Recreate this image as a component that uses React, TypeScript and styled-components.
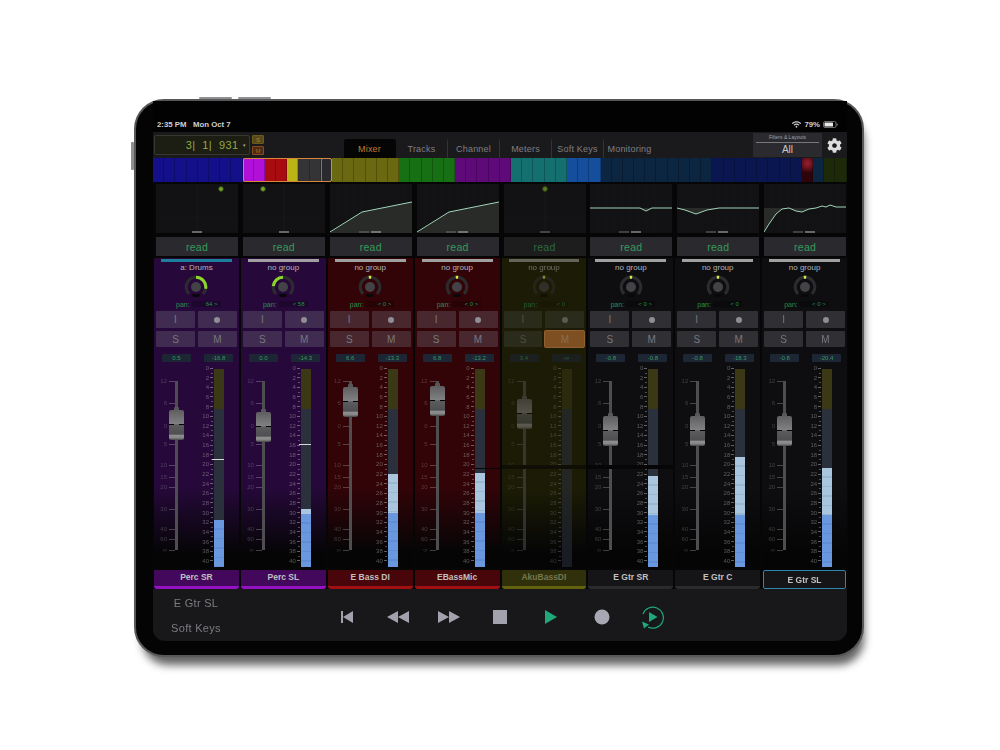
import React from 'react';
import styled, { createGlobalStyle } from 'styled-components';
import { FaCog, FaWifi } from 'react-icons/fa';

const GlobalStyle = createGlobalStyle`
  html, body {
    margin: 0;
    background: #fff;
    font-family: "Liberation Sans", Arial, sans-serif;
  }
`;

const Page = styled.div`
  width: 1000px;
  height: 750px;
  padding: 99px 0 0 134px;
  box-sizing: border-box;
  overflow: hidden;
`;

const Device = styled.div`
  position: relative;
  width: 730px;
  height: 558px;
  box-sizing: border-box;
  padding: 0 15px 14px 17px;
  display: flex;
  background: #040405;
  border: 2px solid #58585a;
  border-radius: 30px;
  box-shadow: 4px 12px 8px -4px rgba(0, 0, 0, 0.62);
`;

const SideButton = styled.div<{ $left: number; $top: number; $w: number; $h: number }>`
  position: absolute;
  left: ${(p) => p.$left}px;
  top: ${(p) => p.$top}px;
  width: ${(p) => p.$w}px;
  height: ${(p) => p.$h}px;
  background: #8f8f92;
  border-radius: 1px;
`;

const Screen = styled.div`
  flex: 1;
  display: flex;
  flex-direction: column;
  min-width: 0;
  filter: blur(0.4px);
`;

const StatusBar = styled.div`
  height: 31px;
  flex: none;
  box-sizing: border-box;
  padding: 0 9px 3px 4px;
  display: flex;
  align-items: flex-end;
  justify-content: space-between;
  color: #d0d0d0;
  font-size: 7.8px;
  font-weight: bold;
  background: #020203;
`;

const StatusRight = styled.div`
  display: flex;
  align-items: center;
  gap: 3px;
`;

const TopBar = styled.div`
  height: 26px;
  flex: none;
  display: flex;
  align-items: center;
  background: #1a1a1d;
`;

const Timecode = styled.div`
  width: 96px;
  height: 20px;
  margin-left: 1px;
  box-sizing: border-box;
  padding-right: 3px;
  display: flex;
  align-items: center;
  justify-content: flex-end;
  gap: 4px;
  background: #1c1d13;
  border: 1px solid #38382f;
  border-radius: 2px;
  color: #93aa46;
  font-size: 11px;
  letter-spacing: 0.4px;
  white-space: pre;
`;

const Caret = styled.span`
  color: #aaa;
  font-size: 5px;
`;

const SoloMute = styled.div`
  width: 12px;
  height: 20px;
  margin-left: 2px;
  display: flex;
  flex-direction: column;
  justify-content: space-between;
`;

const SmallKey = styled.div<{ $tone: string; $edge: string; $text: string }>`
  height: 9px;
  display: flex;
  align-items: center;
  justify-content: center;
  font-size: 6px;
  background: ${(p) => p.$tone};
  border: 1px solid ${(p) => p.$edge};
  box-sizing: border-box;
  border-radius: 1px;
  color: ${(p) => p.$text};
`;

const Tabs = styled.div`
  display: flex;
  align-self: flex-end;
  height: 19px;
  margin-left: 80px;
`;

const Tab = styled.div<{ $active?: boolean; $sep?: boolean }>`
  width: 52px;
  display: flex;
  align-items: center;
  justify-content: center;
  font-size: 9px;
  letter-spacing: 0.2px;
  white-space: nowrap;
  color: ${(p) => (p.$active ? '#c9772f' : '#7e7e83')};
  background: ${(p) => (p.$active ? '#050506' : 'transparent')};
  border-radius: 2px 2px 0 0;
  border-right: 1px solid ${(p) => (p.$sep ? '#333337' : 'transparent')};
  box-sizing: border-box;
`;

const Filters = styled.div`
  width: 69px;
  height: 24px;
  margin-left: auto;
  display: flex;
  flex-direction: column;
  align-items: center;
  background: #2b2b2f;
  color: #c8c8c8;
`;

const FiltersLabel = styled.div`
  width: 63px;
  height: 9px;
  border-bottom: 1px solid #77777c;
  font-size: 5px;
  line-height: 9px;
  text-align: center;
  color: #a0a0a4;
`;

const FiltersValue = styled.div`
  font-size: 10px;
  line-height: 14px;
`;

const GearSlot = styled.div`
  width: 25px;
  display: flex;
  justify-content: center;
  color: #dcdcdc;
  font-size: 15px;
`;

const Overview = styled.div`
  height: 24px;
  flex: none;
  display: flex;
`;

const Cell = styled.div<{ $color: string; $glow?: boolean; $frame?: boolean }>`
  flex: 1 1 0;
  background: ${(p) =>
    p.$glow ? `radial-gradient(circle at 50% 22%, #93202e 0, #7a1622 18%, ${p.$color} 50%)` : p.$color};
  box-shadow: inset -1px 0 rgba(0, 0, 0, 0.22);
  outline: ${(p) => (p.$frame ? '1.5px solid #3f86c4' : 'none')};
  outline-offset: -1px;
  border-radius: ${(p) => (p.$frame ? '2px' : '0')};
`;

const Selection = styled.div<{ $span: number }>`
  flex: ${(p) => p.$span} ${(p) => p.$span} 0;
  display: flex;
  outline: 1.5px solid #d9873a;
  outline-offset: -1px;
  border-radius: 2px;
`;

const Mixer = styled.div`
  flex: none;
  width: 693px;
  padding: 2px 1px 0;
  display: grid;
  grid-template-columns: repeat(8, 1fr);
  column-gap: 2px;
  background: #060607;
`;

const Strip = styled.div`
  display: flex;
  flex-direction: column;
  min-width: 0;
`;

const Graph = styled.svg`
  display: block;
  width: 82px;
  height: 49px;
  margin-left: 2px;
  background: #121214;
`;

const ReadButton = styled.div<{ $dim?: boolean }>`
  width: 82px;
  height: 19px;
  margin: 4px 0 0 2px;
  display: flex;
  align-items: center;
  justify-content: center;
  background: ${(p) => (p.$dim ? '#1d1d1e' : '#2a2a2e')};
  color: ${(p) => (p.$dim ? '#2c6a40' : '#379a5c')};
  font-size: 10.5px;
  letter-spacing: 0.3px;
`;

const Body = styled.div<{ $color: string }>`
  height: 310px;
  margin-top: 2px;
  background: linear-gradient(${(p) => p.$color} 0, ${(p) => p.$color} 74%, #050506 95%);
`;

const Inner = styled.div<{ $dim?: boolean }>`
  height: 100%;
  display: flex;
  flex-direction: column;
  opacity: ${(p) => (p.$dim ? 0.55 : 1)};
`;

const GroupBar = styled.div<{ $color: string }>`
  height: 2.5px;
  flex: none;
  margin: 1px 7px 0;
  background: ${(p) => p.$color};
`;

const GroupLabel = styled.div`
  margin-top: 1.5px;
  height: 10px;
  line-height: 10px;
  font-size: 8px;
  text-align: center;
  color: #b4b4b6;
`;

const KnobBox = styled.svg`
  display: block;
  width: 24px;
  height: 24px;
  margin: 2px auto 0;
`;

const PanRow = styled.div`
  height: 8px;
  margin-top: 1px;
  padding-left: 22px;
  display: flex;
  align-items: center;
  font-size: 7px;
  color: #2a8f4e;
`;

const PanValue = styled.div`
  width: 29px;
  margin-left: 2px;
  text-align: right;
  padding-right: 3px;
  box-sizing: border-box;
  font-size: 6px;
  background: rgba(0, 0, 0, 0.22);
`;

const ButtonGrid = styled.div`
  margin-top: 3px;
  padding: 0 2px;
  display: grid;
  grid-template-columns: 1fr 1fr;
  grid-template-rows: 17px 16px;
  gap: 3px;
`;

const StripButton = styled.div<{ $lit?: boolean }>`
  display: flex;
  align-items: center;
  justify-content: center;
  font-size: 10px;
  border-radius: 1px;
  color: ${(p) => (p.$lit ? '#e6b48a' : '#77777e')};
  background: ${(p) => (p.$lit ? '#d07a3a' : 'rgba(125, 125, 135, 0.3)')};
  box-shadow: ${(p) => (p.$lit ? '0 0 0 1px #f09a50' : 'none')};
`;

const RecDot = styled.span`
  width: 6px;
  height: 6px;
  border-radius: 50%;
  background: #8e8e94;
`;

const Pills = styled.div`
  margin-top: 7px;
  padding-left: 8px;
  display: flex;
  gap: 13px;
`;

const Pill = styled.div`
  width: 29px;
  height: 8px;
  line-height: 8px;
  text-align: center;
  font-size: 6px;
  color: #3a9a64;
  background: #1c2635;
  border-radius: 1px;
`;

const FaderArea = styled.div`
  position: relative;
  height: 204px;
  margin-top: 2px;
  display: flex;
  flex: none;
`;

const FaderCol = styled.div`
  position: relative;
  width: 48px;
`;

const Track = styled.div`
  position: absolute;
  left: 21px;
  top: 17px;
  width: 3px;
  height: 169px;
  background: #4e4e51;
`;

const Mark = styled.div`
  position: absolute;
  left: 0;
  width: 21px;
  display: flex;
  align-items: center;
  justify-content: flex-end;
  gap: 2px;
  font-size: 6px;
  line-height: 6px;
  color: rgba(200, 200, 200, 0.26);
  transform: translateY(-50%);

  &::after {
    content: '';
    width: 6px;
    height: 1px;
    background: rgba(200, 200, 200, 0.3);
  }
`;

const Cap = styled.div`
  position: absolute;
  left: 15px;
  width: 15px;
  height: 30px;
  border-radius: 2px;
  background: linear-gradient(
    #5e5e60 0,
    #808082 45%,
    #5c5c5f 50%,
    #4e4f52 80%,
    #8e8e8e 85%,
    #848484 93%,
    #424244 100%
  );

  &::before {
    content: '';
    position: absolute;
    left: 5px;
    top: -3px;
    width: 5px;
    height: 3px;
    background: #575759;
    border-radius: 1px 1px 0 0;
  }

  &::after {
    content: '';
    position: absolute;
    left: 0;
    right: 0;
    top: 14px;
    height: 1px;
    background: linear-gradient(90deg, #000 0 33%, transparent 33% 67%, #000 67% 100%);
  }
`;

const MeterScale = styled.div`
  width: 11px;
  height: 201px;
  display: flex;
  flex-direction: column;
  justify-content: space-between;
`;

const ScaleRow = styled.div`
  position: relative;
  height: 8px;
  display: flex;
  align-items: center;
  justify-content: flex-end;
  gap: 1px;
  font-size: 6px;
  color: rgba(205, 205, 205, 0.4);

  &::after {
    content: '';
    width: 3px;
    height: 1px;
    background: rgba(205, 205, 205, 0.45);
  }
`;

const MinorTick = styled.span`
  position: absolute;
  right: 0;
  top: 8.5px;
  width: 2px;
  height: 1px;
  background: rgba(205, 205, 205, 0.35);
`;

const Meter = styled.div`
  position: relative;
  width: 10px;
  height: 198px;
  margin: 5px 0 0 1px;
  display: flex;
  flex-direction: column;
`;

const MeterHot = styled.div`
  height: 40px;
  flex: none;
  background: #3b3815;
`;

const MeterIdle = styled.div`
  flex: 1;
  background: #2a313d;
`;

const MeterLight = styled.div`
  flex: none;
  background: repeating-linear-gradient(#a9c6de 0 8px, #98b8d2 8px 9.6px);
`;

const MeterBlue = styled.div`
  flex: none;
  background: repeating-linear-gradient(#6a98de 0 8px, #5f8dd6 8px 9.6px);
`;

const Peak = styled.div`
  position: absolute;
  left: -2px;
  right: 0;
  height: 1px;
  background: #d8d8d8;
`;

const Tear = styled.div<{ $thin?: boolean }>`
  position: absolute;
  left: ${(p) => (p.$thin ? '60px' : '-2px')};
  right: -2px;
  top: ${(p) => (p.$thin ? '104px' : '101px')};
  height: ${(p) => (p.$thin ? '1px' : '4px')};
  background: #060606;
`;

const NameCell = styled.div<{ $bg: string; $stripe: string; $selected?: boolean; $dim?: boolean }>`
  height: 19px;
  margin-top: 2px;
  box-sizing: border-box;
  padding-bottom: 3px;
  display: flex;
  align-items: center;
  justify-content: center;
  font-size: 8.5px;
  font-weight: bold;
  color: ${(p) => (p.$dim ? '#77774e' : '#c0c0c0')};
  background: ${(p) => p.$bg};
  border-bottom: 3px solid ${(p) => p.$stripe};
  border-radius: 1px 1px 3px 3px;

  ${(p) =>
    p.$selected &&
    `
    border: 1px solid #2c86ad;
    padding-bottom: 0;
    border-radius: 2px;
    margin-left: 1px;
    margin-right: 1px;
  `}
`;

const BottomBar = styled.div`
  flex: 1;
  display: flex;
  align-items: center;
  background: #18181b;
  border-radius: 0 0 12px 12px;
`;

const TrackInfo = styled.div`
  width: 86px;
  display: flex;
  flex-direction: column;
  align-items: center;
  gap: 13px;
  padding-top: 1px;
  font-size: 11px;
  line-height: 12px;
  letter-spacing: 0.3px;
  color: #7c7c81;
`;

const Transport = styled.div`
  margin-left: 82.5px;
  display: flex;
  padding-top: 3px;
`;

const TransportButton = styled.div`
  width: 51px;
  display: flex;
  justify-content: center;
`;

type Kind = 'purple' | 'red' | 'olive' | 'plain';

const kinds: Record<Kind, { body: string; name: string; stripe: string }> = {
  purple: { body: '#26093a', name: '#43075c', stripe: '#9412c4' },
  red: { body: '#320408', name: '#48050a', stripe: '#a01012' },
  olive: { body: '#1c1c06', name: '#30300a', stripe: '#62620f' },
  plain: { body: '#0e0e10', name: '#151517', stripe: '#2b2b2e' },
};

type GraphKind = 'dotRight' | 'dotLeft' | 'dotMid' | 'ramp' | 'notch' | 'dip' | 'rise';

interface ChannelData {
  name: string;
  kind: Kind;
  group: string;
  groupColor: string;
  pan: string;
  panDeg: number;
  trim: string;
  level: string;
  capTop: number;
  lightTop?: number;
  blueTop?: number;
  peak?: number;
  graph: GraphKind;
  dim?: boolean;
  selected?: boolean;
  tear?: 'thin' | 'thick';
}

const grey = '#a0a0a0';

const channels: ChannelData[] = [
  { name: 'Perc SR', kind: 'purple', group: 'a: Drums', groupColor: '#1d7f9c', pan: '64 >', panDeg: 100, trim: '0.5', level: '-16.8', capTop: 410, blueTop: 520, peak: 459, graph: 'dotRight' },
  { name: 'Perc SL', kind: 'purple', group: 'no group', groupColor: grey, pan: '< 58', panDeg: -85, trim: '0.0', level: '-14.3', capTop: 412, lightTop: 509, blueTop: 514, peak: 444, graph: 'dotLeft' },
  { name: 'E Bass DI', kind: 'red', group: 'no group', groupColor: grey, pan: '< 0 >', panDeg: 0, trim: '6.6', level: '-13.3', capTop: 387, lightTop: 474, blueTop: 513, graph: 'ramp' },
  { name: 'EBassMic', kind: 'red', group: 'no group', groupColor: grey, pan: '< 0 >', panDeg: 0, trim: '6.8', level: '-13.2', capTop: 386, lightTop: 473, blueTop: 513, graph: 'ramp', tear: 'thin' },
  { name: 'AkuBassDI', kind: 'olive', group: 'no group', groupColor: grey, pan: '< 0', panDeg: 0, trim: '3.4', level: '-∞', capTop: 399, graph: 'dotMid', dim: true, tear: 'thick' },
  { name: 'E Gtr SR', kind: 'plain', group: 'no group', groupColor: grey, pan: '< 0 >', panDeg: 0, trim: '-0.8', level: '-0.8', capTop: 416, lightTop: 476, blueTop: 515, graph: 'notch', tear: 'thick' },
  { name: 'E Gtr C', kind: 'plain', group: 'no group', groupColor: grey, pan: '< 0', panDeg: 0, trim: '-0.8', level: '-18.3', capTop: 416, lightTop: 457, blueTop: 515, graph: 'dip' },
  { name: 'E Gtr SL', kind: 'plain', group: 'no group', groupColor: grey, pan: '< 0 >', panDeg: 0, trim: '-0.8', level: '-20.4', capTop: 416, lightTop: 468, blueTop: 515, graph: 'rise', selected: true },
];

const run = (color: string, count: number) => Array.from({ length: count }, () => color);

const leftCells = run('#14108a', 8);
const rightCells = [
  ...run('#6a6810', 6),
  ...run('#177014', 5),
  ...run('#5e0a78', 5),
  ...run('#13706f', 5),
  ...run('#144e9c', 3),
  ...run('#0c2540', 10),
  ...run('#0a1650', 8),
];

const selectedCells = ['#b010d8', '#b010d8', '#a80c10', '#a80c10', '#bcb414', '#343436', '#343436'];

const faderMarks: [string, number][] = [
  ['12', 381],
  ['6', 403],
  ['0', 426],
  ['5', 444],
  ['10', 465],
  ['15', 477],
  ['20', 487],
  ['30', 509],
  ['40', 529],
  ['60', 539],
  ['∞', 550],
];

const meterLabels = Array.from({ length: 21 }, (_, i) => i * 2);

const polar = (r: number, deg: number) => {
  const rad = ((deg - 90) * Math.PI) / 180;
  return `${(12 + r * Math.cos(rad)).toFixed(2)} ${(12 + r * Math.sin(rad)).toFixed(2)}`;
};

const arc = (r: number, from: number, to: number) =>
  `M${polar(r, from)} A${r} ${r} 0 ${Math.abs(to - from) > 180 ? 1 : 0} 1 ${polar(r, to)}`;

const Knob: React.FC<{ deg: number }> = ({ deg }) => (
  <KnobBox viewBox="0 0 24 24">
    <path d={arc(9.8, -135, 135)} fill="none" stroke="#2c2c2e" strokeWidth="3" />
    {deg === 0 ? (
      <path d={arc(9.8, -7, 7)} fill="none" stroke="#d8e84a" strokeWidth="3" />
    ) : deg > 0 ? (
      <path d={arc(9.8, 0, deg)} fill="none" stroke="#8fd62c" strokeWidth="3" />
    ) : (
      <path d={arc(9.8, deg, 0)} fill="none" stroke="#8fd62c" strokeWidth="3" />
    )}
    <circle cx="12" cy="12" r="5" fill="#434347" />
    <path d="M8 19 L16 19 L15 22 L9 22 Z" fill="#080808" />
  </KnobBox>
);

const graphGrid = [16, 33];
const fineGrid = [8, 16, 24, 32, 41, 49, 57, 65, 74];

const curves: Partial<Record<GraphKind, { line: string; fill: string }>> = {
  ramp: { line: '0,48 32,28 82,18', fill: '0,49 32,28 82,18 82,49' },
  notch: { line: '0,24 50,24 56,27 62,24 82,24', fill: '50,24 56,27 62,24' },
  dip: { line: '0,24 8,26 19,30 30,26 42,24 82,24', fill: '0,24 8,26 19,30 30,26 42,24' },
  rise: {
    line: '0,48 5,40 12,30 18,25 25,24 32,27 38,28 45,25 52,24 58,22 62,23 66,21 72,23 82,23',
    fill: '0,24 0,48 5,40 12,30 18,25 25,24 32,27 38,28 45,25 52,24',
  },
};

const dots: Partial<Record<GraphKind, number>> = { dotRight: 65, dotLeft: 20, dotMid: 41 };

const AutomationGraph: React.FC<{ kind: GraphKind; dim?: boolean }> = ({ kind, dim }) => {
  const curve = curves[kind];
  const dot = dots[kind];
  return (
    <Graph viewBox="0 0 82 49">
      {curve
        ? fineGrid.map((x) => <line key={x} x1={x} y1="0" x2={x} y2="49" stroke="#19191b" strokeWidth="0.7" />)
        : graphGrid.map((y) => <line key={y} x1="0" y1={y} x2="82" y2={y} stroke="#18181a" strokeWidth="0.7" />)}
      {!curve && <line x1="41" y1="0" x2="41" y2="49" stroke="#1e1e21" strokeWidth="0.7" />}
      {curve && <polygon points={curve.fill} fill="#292b29" />}
      {curve && <polyline points={curve.line} fill="none" stroke="#9fd4b8" strokeWidth="1" />}
      {dot !== undefined && <circle cx={dot} cy="5" r="2.4" fill={dim ? '#5a7a20' : '#73a52a'} stroke="#2e4416" strokeWidth="0.8" />}
      {curve ? (
        <>
          <rect x="29" y="47.5" width="10" height="1" fill="#6e6e6e" />
          <rect x="41" y="47.5" width="10" height="1" fill="#bcbcbc" />
        </>
      ) : (
        <rect x="36" y="47.5" width="10" height="1" fill={dim ? '#777' : '#bcbcbc'} />
      )}
    </Graph>
  );
};

const ChannelStrip: React.FC<{ channel: ChannelData }> = ({ channel }) => {
  const colors = kinds[channel.kind];
  const meterTop = 369;
  const meterBottom = 567;
  const { blueTop, lightTop } = channel;
  return (
    <Strip>
      <AutomationGraph kind={channel.graph} dim={channel.dim} />
      <ReadButton $dim={channel.dim}>read</ReadButton>
      <Body $color={colors.body}>
        <Inner $dim={channel.dim}>
          <GroupBar $color={channel.groupColor} />
          <GroupLabel>{channel.group}</GroupLabel>
          <Knob deg={channel.panDeg} />
          <PanRow>
            pan:
            <PanValue>{channel.pan}</PanValue>
          </PanRow>
          <ButtonGrid>
            <StripButton>I</StripButton>
            <StripButton>
              <RecDot />
            </StripButton>
            <StripButton>S</StripButton>
            <StripButton $lit={channel.dim}>M</StripButton>
          </ButtonGrid>
          <Pills>
            <Pill>{channel.trim}</Pill>
            <Pill>{channel.level}</Pill>
          </Pills>
          <FaderArea>
            <FaderCol>
              <Track />
              {faderMarks.map(([label, y]) => (
                <Mark key={label} style={{ top: y - 364 }}>
                  {label}
                </Mark>
              ))}
              <Cap style={{ top: channel.capTop - 364 }} />
            </FaderCol>
            <MeterScale>
              {meterLabels.map((n) => (
                <ScaleRow key={n}>
                  {n}
                  {n < 40 && <MinorTick />}
                </ScaleRow>
              ))}
            </MeterScale>
            <Meter>
              <MeterHot />
              <MeterIdle />
              {lightTop && blueTop && <MeterLight style={{ height: blueTop - lightTop }} />}
              {blueTop && <MeterBlue style={{ height: meterBottom - blueTop }} />}
              {channel.peak && <Peak style={{ top: channel.peak - meterTop }} />}
            </Meter>
            {channel.tear && <Tear $thin={channel.tear === 'thin'} />}
          </FaderArea>
        </Inner>
      </Body>
      <NameCell $bg={colors.name} $stripe={colors.stripe} $selected={channel.selected} $dim={channel.dim}>
        {channel.name}
      </NameCell>
    </Strip>
  );
};

const metal = '#a2a2ae';
const green = '#1fa878';

const TransportIcon: React.FC<{ children: React.ReactNode }> = ({ children }) => (
  <TransportButton>
    <svg width="30" height="28" viewBox="0 0 30 28">
      {children}
    </svg>
  </TransportButton>
);

const App: React.FC = () => {
  return (
    <>
      <GlobalStyle />
      <Page>
        <Device>
          <SideButton $left={63} $top={-4} $w={33} $h={2} />
          <SideButton $left={102} $top={-4} $w={33} $h={2} />
          <SideButton $left={-5} $top={41} $w={3} $h={28} />
          <Screen>
            <StatusBar>
              <span>2:35 PM&nbsp;&nbsp;&nbsp;Mon Oct 7</span>
              <StatusRight>
                <FaWifi size={9} />
                79%
                <svg width="15" height="7" viewBox="0 0 15 7">
                  <rect x="0.5" y="0.5" width="12.5" height="6" rx="1.5" fill="none" stroke="#999" strokeWidth="0.7" />
                  <rect x="1.5" y="1.5" width="8.5" height="4" rx="0.6" fill="#e8e8e8" />
                  <rect x="13.6" y="2.4" width="1" height="2.2" rx="0.4" fill="#999" />
                </svg>
              </StatusRight>
            </StatusBar>
            <TopBar>
              <Timecode>
                3|  1|  931
                <Caret>▾</Caret>
              </Timecode>
              <SoloMute>
                <SmallKey $tone="#59491a" $edge="#6a5a1e" $text="#9a8a30">S</SmallKey>
                <SmallKey $tone="#4c2c12" $edge="#8a4c1e" $text="#a06a30">M</SmallKey>
              </SoloMute>
              <Tabs>
                <Tab $active>Mixer</Tab>
                <Tab $sep>Tracks</Tab>
                <Tab $sep>Channel</Tab>
                <Tab $sep>Meters</Tab>
                <Tab $sep>Soft Keys</Tab>
                <Tab>Monitoring</Tab>
              </Tabs>
              <Filters>
                <FiltersLabel>Filters &amp; Layouts</FiltersLabel>
                <FiltersValue>All</FiltersValue>
              </Filters>
              <GearSlot>
                <FaCog />
              </GearSlot>
            </TopBar>
            <Overview>
              {leftCells.map((c, i) => (
                <Cell key={`l${i}`} $color={c} />
              ))}
              <Selection $span={8}>
                {selectedCells.map((c, i) => (
                  <Cell key={`s${i}`} $color={c} />
                ))}
                <Cell $color="#2a2a2e" $frame />
              </Selection>
              {rightCells.map((c, i) => (
                <Cell key={`r${i}`} $color={c} />
              ))}
              <Cell $color="#2c0409" $glow />
              <Cell $color="#0c2540" />
              <Cell $color="#1c2a0a" />
              <Cell $color="#1c2a0a" />
            </Overview>
            <Mixer>
              {channels.map((c) => (
                <ChannelStrip key={c.name} channel={c} />
              ))}
            </Mixer>
            <BottomBar>
              <TrackInfo>
                <span>E Gtr SL</span>
                <span>Soft Keys</span>
              </TrackInfo>
              <Transport>
                <TransportIcon>
                  <rect x="9" y="8" width="2" height="12" fill={metal} />
                  <path d="M21 8 V20 L11 14 Z" fill={metal} />
                </TransportIcon>
                <TransportIcon>
                  <path d="M15 8 V20 L4 14 Z M26 8 V20 L15 14 Z" fill={metal} />
                </TransportIcon>
                <TransportIcon>
                  <path d="M4 8 V20 L15 14 Z M15 8 V20 L26 14 Z" fill={metal} />
                </TransportIcon>
                <TransportIcon>
                  <rect x="8" y="7" width="14" height="14" fill={metal} />
                </TransportIcon>
                <TransportIcon>
                  <path d="M9 7 V21 L21 14 Z" fill={green} />
                </TransportIcon>
                <TransportIcon>
                  <circle cx="15" cy="14" r="7.5" fill="#a8a8b4" />
                </TransportIcon>
                <TransportIcon>
                  <path d="M5 11 A10.5 10.5 0 1 1 10 24" fill="none" stroke={green} strokeWidth="1.2" />
                  <path d="M11 9 L19.5 14 L11 19 Z" fill={green} />
                  <path d="M4 18.5 L11 21.5 L6 25.5 Z" fill={green} />
                </TransportIcon>
              </Transport>
            </BottomBar>
          </Screen>
        </Device>
      </Page>
    </>
  );
};

export default App;
